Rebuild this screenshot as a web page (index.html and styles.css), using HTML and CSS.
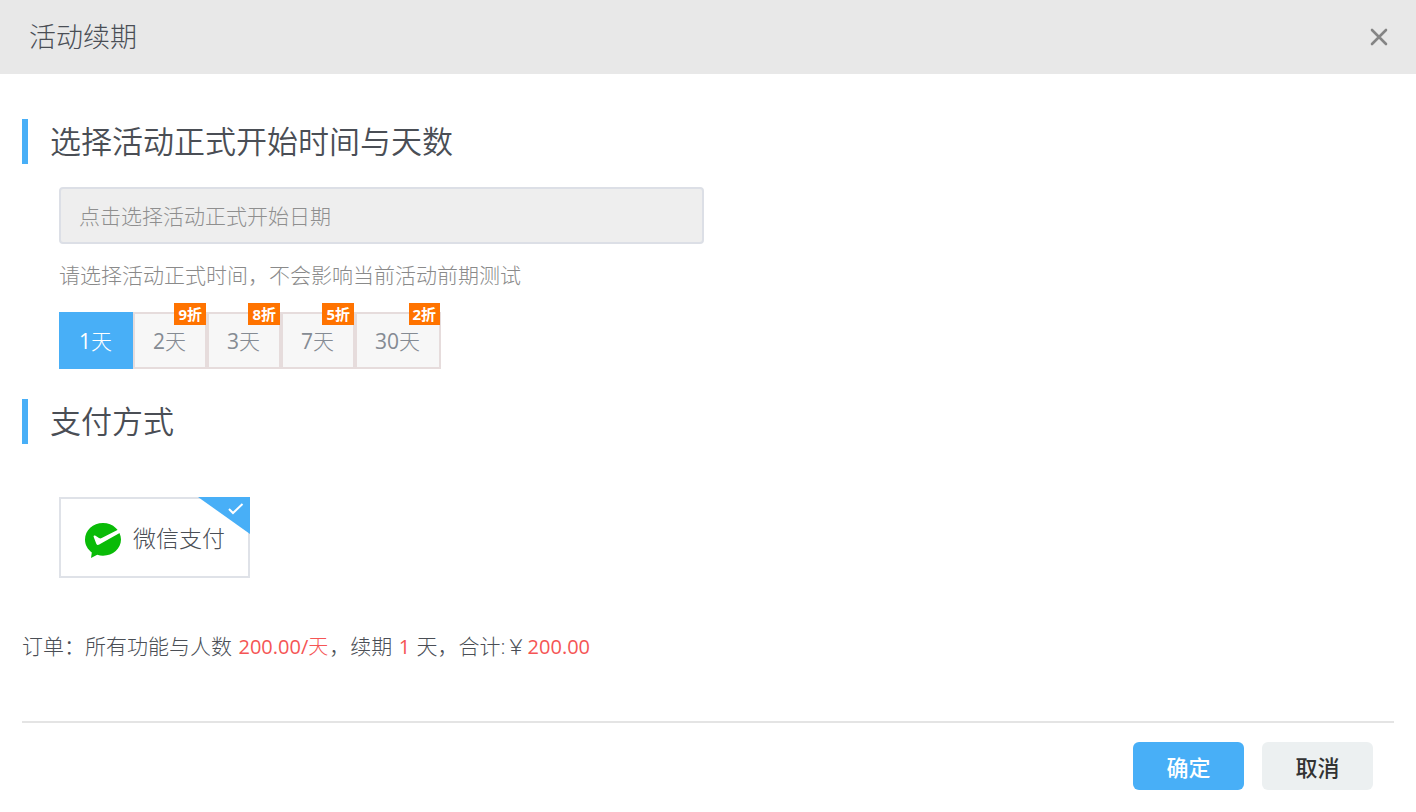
FILE: index.html
```html
<!DOCTYPE html>
<html lang="zh-CN">
<head>
    <meta charset="UTF-8">
    <meta name="viewport" content="width=device-width, initial-scale=1.0">
    <title>活动续期</title>
    <link rel="stylesheet" href="styles.css">
</head>
<body>

<div class="dialog" role="dialog" aria-labelledby="dialogTitle">
    <div class="dialog-header">
        <h1 class="dialog-title" id="dialogTitle">活动续期</h1>
        <button type="button" class="close-btn" aria-label="关闭">
            <svg width="18" height="18" viewBox="0 0 18 18" fill="none" stroke="currentColor" stroke-width="2.6" stroke-linecap="round">
                <path d="M2 2l14 14M16 2L2 16"/>
            </svg>
        </button>
    </div>

    <form class="dialog-body">
        <h2 class="section-title"><label for="startDate">选择活动正式开始时间与天数</label></h2>
        <div class="section-content">
            <input type="text" class="date-input" id="startDate" placeholder="点击选择活动正式开始日期" readonly>
            <p class="hint">请选择活动正式时间，不会影响当前活动前期测试</p>
            <div class="day-list">
                <label class="day-item"><input type="radio" name="days" value="1" checked><span><b>1</b>天</span></label>
                <label class="day-item"><input type="radio" name="days" value="2"><span><b>2</b>天</span><em class="badge">9折</em></label>
                <label class="day-item"><input type="radio" name="days" value="3"><span><b>3</b>天</span><em class="badge">8折</em></label>
                <label class="day-item"><input type="radio" name="days" value="7"><span><b>7</b>天</span><em class="badge">5折</em></label>
                <label class="day-item"><input type="radio" name="days" value="30"><span><b>30</b>天</span><em class="badge">2折</em></label>
            </div>
        </div>

        <h2 class="section-title">支付方式</h2>
        <div class="section-content">
            <label class="pay-item">
                <input type="radio" name="pay" value="wechat" checked>
                <svg class="pay-icon" width="36" height="42" viewBox="0 -6 36 42">
                    <path fill="#09bb07" d="M18 0C8 0 0 7.300 0 16.500c0 5.500 2.700 9.800 6.800 12.900L6 35l6.200-3.200c1.800.6 3.800.9 5.800.9 10 0 18-7.200 18-16.200S28 0 18 0z"/>
                    <path fill="#fff" d="M8.600 13.800c-.2-1.100.9-1.600 1.900-1L14 15c.9.600 1.700.6 2.700.1L33.400 6.600l2.600 2.600L14.200 21.600c-1.300.8-2.300.5-2.900-.9z"/>
                </svg>
                <span class="pay-name">微信支付</span>
                <svg class="pay-corner" width="52" height="37" viewBox="0 0 52 37">
                    <path fill="#48aff7" d="M0 0h52v37z"/>
                    <path fill="none" stroke="#fff" stroke-width="2" d="M31 12l4 4 9.500-9"/>
                </svg>
            </label>
        </div>

        <p class="order">订单：所有功能与人数 <span class="price"><b>200.00/</b>天</span>，续期 <span class="price"><b>1</b></span> 天，合计:￥<span class="price"><b>200.00</b></span></p>
    </form>

    <div class="dialog-footer">
        <button type="button" class="btn btn-primary">确定</button>
        <button type="button" class="btn btn-default">取消</button>
    </div>
</div>

</body>
</html>
```
FILE: styles.css
```css
* {
    box-sizing: border-box;
}

body {
    margin: 0;
    background-color: #fff;
    font-family: "Open Sans", "Noto Sans CJK SC", sans-serif;
    font-weight: 300;
    font-size: 21px;
    color: #4a4e55;
}

h1, h2, p {
    margin: 0;
    font-weight: 300;
}

/* digits are one step heavier than the light Chinese text */
b {
    font-weight: 400;
}

button, input {
    font-family: inherit;
    font-weight: inherit;
}

.dialog {
    min-height: 100vh;
    display: flex;
    flex-direction: column;
    background-color: #fff;
}

.dialog-header {
    display: flex;
    align-items: center;
    justify-content: space-between;
    height: 74px;
    padding: 0 28px 0 29px;
    background-color: #e8e8e8;
}

.dialog-title {
    font-size: 27px;
    line-height: 36px;
}

.close-btn {
    display: flex;
    padding: 0;
    border: none;
    background: none;
    color: #858585;
    cursor: pointer;
}

.dialog-body {
    flex: 1;
    margin: 0 22px;
    padding-top: 45px;
    border-bottom: 2px solid #e4e4e4;
}

.section-title {
    padding-left: 22px;
    border-left: 6px solid #48aff7;
    font-size: 31px;
    font-weight: 350;
    line-height: 45px;
}

.section-content {
    padding: 23px 0 30px 37px;
}

.date-input {
    display: block;
    width: 100%;
    max-width: 645px;
    height: 57px;
    padding: 0 18px;
    border: 2px solid #dcdfe6;
    border-radius: 4px;
    background-color: #eee;
    font-size: 21px;
}

.date-input::placeholder {
    color: #8f8f8f;
}

.hint {
    margin: 15px 0 21px;
    line-height: 32px;
    color: #8a8a8a;
}

.day-list {
    display: flex;
}

.day-item {
    position: relative;
    padding: 2px 19px 0 18px;
    border: 2px solid #e6dcdc;
    background-color: #f7f7f7;
    line-height: 51px;
    color: #858b93;
    cursor: pointer;
}

.day-item input, .pay-item input {
    position: absolute;
    opacity: 0;
}

.day-item:has(input:checked) {
    border-color: #48aff7;
    background-color: #48aff7;
    color: #fff;
}

.badge {
    position: absolute;
    top: -11px;
    right: -1px;
    padding: 0 4px;
    background-color: #ff7300;
    font-size: 15px;
    font-style: normal;
    font-weight: 700;
    line-height: 22px;
    color: #fff;
}

.pay-item {
    position: relative;
    display: inline-flex;
    align-items: center;
    gap: 12px;
    height: 81px;
    margin-top: 30px;
    padding: 0 23px 0 24px;
    border: 2px solid #dfe2e8;
    cursor: pointer;
}

.pay-name {
    font-size: 23px;
    line-height: 32px;
}

.pay-corner {
    position: absolute;
    top: -2px;
    right: -2px;
}

.order {
    margin: 22px 0 56px;
    line-height: 32px;
}

.price {
    margin: 0 1px;
    color: #f55555;
    font-size: 20px;
}

.dialog-footer {
    display: flex;
    justify-content: flex-end;
    gap: 18px;
    padding: 19px 43px 22px;
}

.btn {
    width: 111px;
    height: 48px;
    border: none;
    border-radius: 6px;
    font-size: 22px;
    font-weight: 500;
    cursor: pointer;
}

.btn-primary {
    background-color: #48aff7;
    color: #fff;
}

.btn-default {
    background-color: #ecf0f1;
    color: #333;
}
```
